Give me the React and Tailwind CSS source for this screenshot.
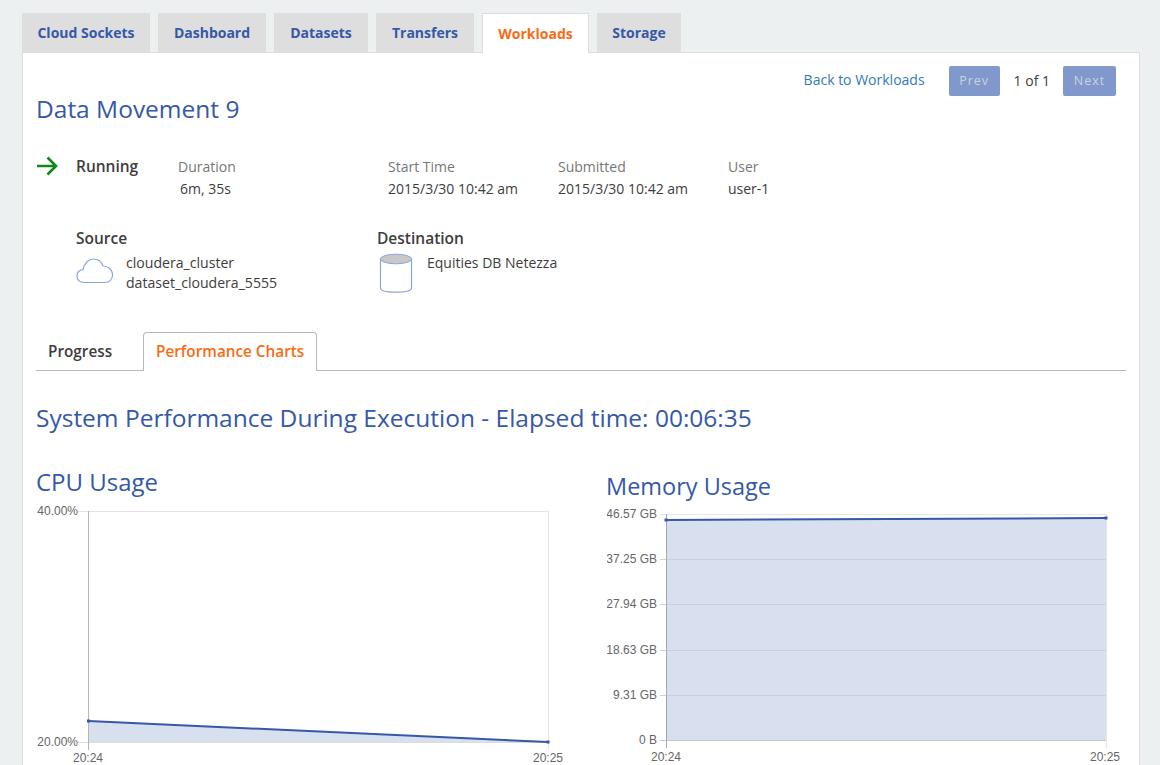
import React from "react";

const tabs = [
  ["Cloud Sockets", "w-[128px]"],
  ["Dashboard", "w-[108px]"],
  ["Datasets", "w-[94px]"],
  ["Transfers", "w-[98px]"],
  ["Workloads", "w-[107px]"],
  ["Storage", "w-[84px]"],
];

function Meta({ label, value, className, valueClass = "" }) {
  return (
    <div className={className}>
      <div className="text-[14px] leading-[22px] text-[#777777]">{label}</div>
      <div className={`text-[14px] leading-[22px] text-[#3d3d3d] ${valueClass}`}>{value}</div>
    </div>
  );
}

function Axis({ x, y, anchor = "end", children }) {
  return (
    <text x={x} y={y} textAnchor={anchor} fontFamily="'Liberation Sans', sans-serif" fontSize="12" fill="#666666">
      {children}
    </text>
  );
}

function CpuChart() {
  return (
    <svg width="540" height="265" viewBox="0 0 540 265" className="block">
      <line x1="42" y1="11.5" x2="512.5" y2="11.5" stroke="#e4e4e4" />
      <line x1="512.5" y1="11" x2="512.5" y2="250" stroke="#e4e4e4" />
      <path d="M52.5 221 L512 242 L52.5 242 Z" fill="#d8dfee" />
      <line x1="42" y1="242.5" x2="512.5" y2="242.5" stroke="#dcdcdc" />
      <line x1="52.5" y1="11" x2="52.5" y2="250" stroke="#b5b5b5" />
      <path d="M52.5 221 L512 242" stroke="#3558a8" strokeWidth="2" fill="none" />
      <rect x="51" y="219.5" width="3" height="3" fill="#3558a8" />
      <rect x="510.5" y="240.5" width="3" height="3" fill="#3558a8" />
      <Axis x="42" y="15">40.00%</Axis>
      <Axis x="42" y="246">20.00%</Axis>
      <Axis x="52" y="262" anchor="middle">20:24</Axis>
      <Axis x="512" y="262" anchor="middle">20:25</Axis>
    </svg>
  );
}

function MemChart() {
  const grid = [59.5, 104.5, 150.5, 195.5];
  const labels = [
    ["46.57 GB", 18],
    ["37.25 GB", 63],
    ["27.94 GB", 108],
    ["18.63 GB", 154],
    ["9.31 GB", 199],
    ["0 B", 244],
  ];
  return (
    <svg width="520" height="265" viewBox="0 0 520 265" className="block">
      <line x1="53" y1="14.5" x2="499" y2="14.5" stroke="#e6e6e6" />
      <path d="M59 20 L499 18 L499 240 L59 240 Z" fill="#d8dfee" />
      {grid.map((y) => (
        <line key={y} x1="53" y1={y} x2="499" y2={y} stroke="#c9cfdd" />
      ))}
      <line x1="53" y1="240.5" x2="499" y2="240.5" stroke="#c4c7d0" />
      <line x1="59.5" y1="14" x2="59.5" y2="248" stroke="#a3a9bb" />
      <line x1="499.5" y1="14" x2="499.5" y2="248" stroke="#e6e6e6" />
      <path d="M59 20 L499 18" stroke="#3558a8" strokeWidth="2" fill="none" />
      <rect x="57.5" y="18.5" width="3" height="3" fill="#3558a8" />
      <rect x="497.5" y="16.5" width="3" height="3" fill="#3558a8" />
      {labels.map(([t, y]) => (
        <Axis key={t} x="50" y={y}>{t}</Axis>
      ))}
      <Axis x="59" y="261" anchor="middle">20:24</Axis>
      <Axis x="498" y="261" anchor="middle">20:25</Axis>
    </svg>
  );
}

export default function App() {
  return (
    <div className="h-[765px] overflow-hidden bg-[#ecf0f1] px-[22px] pt-[13px] font-['Open_Sans',sans-serif]">
      <div className="flex h-[39px] gap-2">
        {tabs.map(([t, w]) =>
          t === "Workloads" ? (
            <div key={t} className={`${w} relative z-10 flex h-[40px] items-center justify-center border border-b-0 border-[#dddddd] bg-white text-[14px] font-bold text-[#f96b13]`}>
              {t}
            </div>
          ) : (
            <div key={t} className={`${w} flex items-center justify-center bg-[#dedede] text-[14px] font-bold text-[#3558a8]`}>
              {t}
            </div>
          )
        )}
      </div>
      <div className="h-[740px] w-[1118px] border border-[#dddddd] bg-white px-[13px]">
        <div className="flex h-[43px] items-end justify-end pr-[10px]">
          <a className="mr-[24px] pb-[4px] text-[14px] leading-[24px] text-[#337ab7]">Back to Workloads</a>
          <button className="h-[30px] w-[51px] rounded-[2px] bg-[#8098cc] text-[12.5px] font-normal tracking-[1px] text-[#c9d2e2]">Prev</button>
          <span className="ml-[14px] mr-[13px] pb-[3px] text-[14px] leading-[24px] text-[#3d3d3d]">1 of 1</span>
          <button className="h-[30px] w-[53px] rounded-[2px] bg-[#8098cc] text-[12.5px] font-normal tracking-[1px] text-[#c9d2e2]">Next</button>
        </div>
        <h1 className="mt-[-3px] text-[24.5px] leading-[32px] font-normal text-[#3558a8]">Data Movement 9</h1>

        <div className="mt-[31px] flex">
          <svg width="22" height="20" viewBox="0 0 22 20" className="shrink-0">
            <path d="M1 10 H20 M11.5 1.5 L20 10 L11.5 18.5" stroke="#0f8a1a" strokeWidth="2.6" fill="none" />
          </svg>
          <div className="ml-[18px] mt-[-2px] h-[24px] w-[102px] text-[15.5px] leading-[24px] font-semibold text-[#3d3d3d]">Running</div>
          <Meta label="Duration" value="6m, 35s" className="w-[210px]" valueClass="pl-[2px]" />
          <Meta label="Start Time" value="2015/3/30 10:42 am" className="w-[170px]" />
          <Meta label="Submitted" value="2015/3/30 10:42 am" className="w-[170px]" />
          <Meta label="User" value="user-1" />
        </div>

        <div className="mt-[27px] flex pl-[40px]">
          <div className="w-[301px]">
            <div className="text-[15.5px] leading-[22px] font-semibold text-[#3d3d3d]">Source</div>
            <div className="flex">
              <svg width="38" height="28" viewBox="0 0 38 28" className="mt-[8px] shrink-0">
                <path d="M8 25.5 C3.5 25.5 1 22.5 1 19 C1 15.5 3.5 13 7 12.7 C8 6.5 12.5 2 17.5 2 C22 2 25.5 5 27 9 C32 9 36.5 12.5 36.5 18 C36.5 22.5 33.5 25.5 29.5 25.5 Z" stroke="#8ba6dc" strokeWidth="1.2" fill="none" />
              </svg>
              <div className="ml-[12px] text-[14.1px] leading-[20px] text-[#3d3d3d]">
                <div className="pt-[4px]">cloudera_cluster</div>
                <div>dataset_cloudera_5555</div>
              </div>
            </div>
          </div>
          <div>
            <div className="text-[15.5px] leading-[22px] font-semibold text-[#3d3d3d]">Destination</div>
            <div className="flex">
              <svg width="34" height="40" viewBox="0 0 34 40" className="ml-[2px] mt-[4px] shrink-0">
                <path d="M1.5 6 V35 C1.5 38 8 39.2 17 39.2 C26 39.2 32.5 38 32.5 35 V6" stroke="#8ba6dc" strokeWidth="1.2" fill="none" />
                <ellipse cx="17" cy="6" rx="15.5" ry="4.8" fill="#c8c8c8" stroke="#8ba6dc" strokeWidth="1" />
              </svg>
              <div className="ml-[14px] pt-[4px] text-[14px] leading-[20px] text-[#3d3d3d]">Equities DB Netezza</div>
            </div>
          </div>
        </div>

        <div className="mt-[39px] flex h-[39px] border-b border-[#b8b8b8]">
          <div className="ml-[12px] w-[95px] pt-[6px] text-[15.3px] leading-[26px] font-semibold text-[#3d3d3d]">Progress</div>
          <div className="relative h-[39px] w-[174px] rounded-t-[4px] border border-b-0 border-[#b8b8b8] bg-white pl-[12px] pt-[5px] text-[15.3px] leading-[26px] font-semibold text-[#f96b13]">
            Performance Charts
          </div>
        </div>

        <h2 className="mt-[30px] text-[24.5px] leading-[34px] font-normal text-[#3558a8]">System Performance During Execution - Elapsed time: 00:06:35</h2>

        <div className="mt-[30px] flex">
          <div className="w-[571px] shrink-0">
            <h3 className="mb-[1px] text-[24px] leading-[34px] font-normal text-[#3558a8]">CPU Usage</h3>
            <CpuChart />
          </div>
          <div className="w-[520px] shrink-0 pt-[4px]">
            <h3 className="mb-[-3px] ml-[-1px] text-[23.5px] leading-[34px] font-normal text-[#3558a8]">Memory Usage</h3>
            <MemChart />
          </div>
        </div>
      </div>
    </div>
  );
}
